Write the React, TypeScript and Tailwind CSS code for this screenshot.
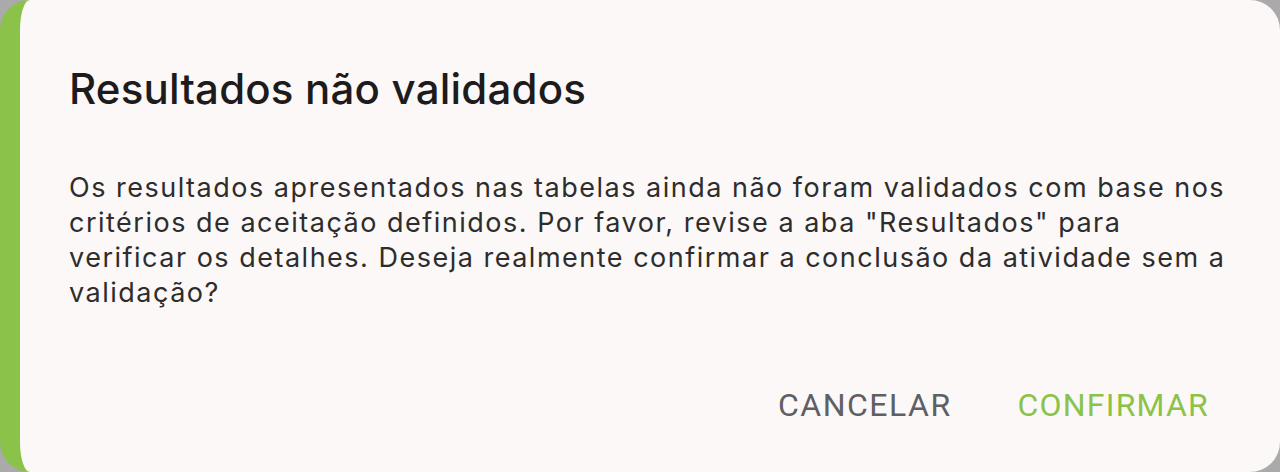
const App = () => {
    return (
        <div className="w-full h-[472px] bg-[#aaaaaa]">
            {/* Dialog card with green accent border */}
            <div className="h-full rounded-[30px] border-l-[20px] border-[#8bc34a] bg-[#fcf8f7] pl-[49px] pr-[50px] pt-[64px] flex flex-col">
                <h2
                    className="text-[42px] leading-[50px] font-medium tracking-[0.2px] text-[#1d1b1b]"
                    style={{ fontFamily: "Inter, 'Noto Sans', sans-serif" }}
                >
                    Resultados não validados
                </h2>

                <p
                    className="mt-[56px] text-[27px] leading-[35px] tracking-[1.5px] text-[#2d2d2d]"
                    style={{ fontFamily: "Inter, 'Noto Sans', sans-serif" }}
                >
                    Os resultados apresentados nas tabelas ainda não foram validados com base nos critérios de
                    aceitação definidos. Por favor, revise a aba "Resultados" para verificar os detalhes. Deseja
                    realmente confirmar a conclusão da atividade sem a validação?
                </p>

                {/* Actions */}
                <div
                    className="mt-[67px] flex justify-end gap-[34px] pr-[5px]"
                    style={{ fontFamily: "Roboto, 'Liberation Sans', sans-serif" }}
                >
                    <button className="py-2 px-4 text-[32px] leading-[40px] tracking-[1.5px] uppercase text-[#5f6064]">
                        Cancelar
                    </button>
                    <button className="py-2 px-4 text-[32px] leading-[40px] tracking-[1.2px] uppercase text-[#8bc34a]">
                        Confirmar
                    </button>
                </div>
            </div>
        </div>
    );
};

export default App;
